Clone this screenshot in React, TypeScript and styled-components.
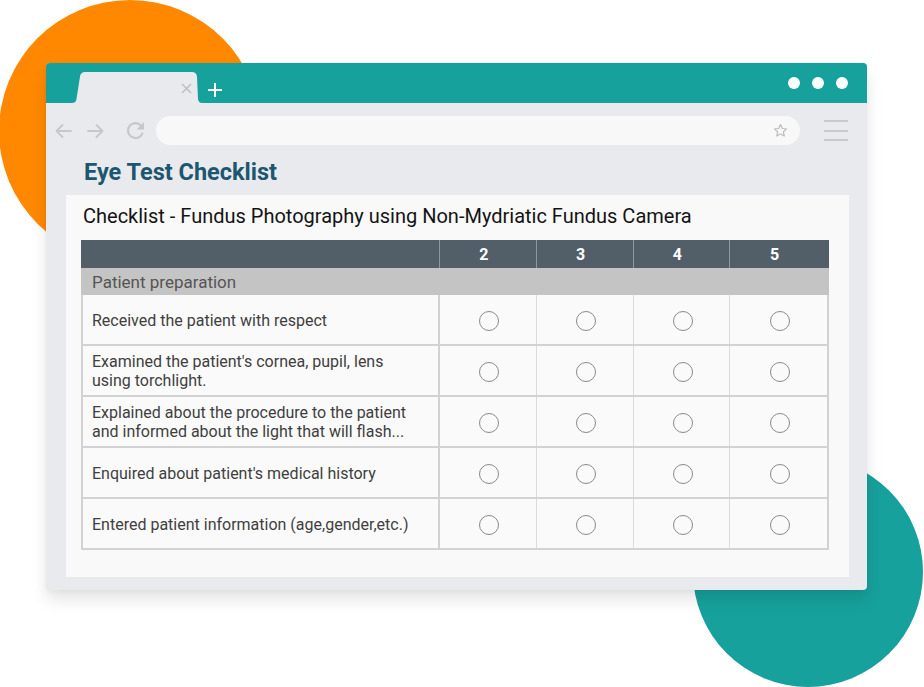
import React from 'react';
import styled, { createGlobalStyle } from 'styled-components';

const Global = createGlobalStyle`
  html, body { margin: 0; padding: 0; background: #ffffff; }
  body { font-family: Roboto, "Liberation Sans", Arial, sans-serif; }
  * { box-sizing: border-box; }
`;

const Stage = styled.div`
  position: relative;
  width: 924px;
  height: 687px;
  overflow: hidden;
  background: #ffffff;
  padding: 63px 0 0 46px;
`;

const Blob = styled.div<{ $color: string; $size: number; $x: number; $y: number }>`
  position: absolute;
  left: ${(p) => p.$x}px;
  top: ${(p) => p.$y}px;
  width: ${(p) => p.$size}px;
  height: ${(p) => p.$size}px;
  border-radius: 50%;
  background: ${(p) => p.$color};
`;

const Window = styled.div`
  position: relative;
  width: 821px;
  height: 527px;
  border-radius: 4px;
  overflow: hidden;
  background: #e9eaee;
  display: flex;
  flex-direction: column;
  box-shadow: 0 10px 16px rgba(0, 0, 0, 0.1), 0 2px 4px rgba(0, 0, 0, 0.04);
`;

const TitleBar = styled.div`
  height: 40px;
  flex: none;
  background: #17a19c;
  display: flex;
  align-items: flex-end;
  padding: 0 19px 0 26px;
`;

const Tab = styled.div`
  position: relative;
  width: 130px;
  height: 31px;
  display: flex;
  align-items: center;
  justify-content: flex-end;
  padding: 2px 10px 0 0;
  &::before {
    content: '';
    position: absolute;
    inset: 0;
    background: #e9eaee;
    clip-path: path('M0 31 C3 31 4 29.5 4.5 27 L8 4.5 C8.5 1.5 10 0 13 0 L120 0 C123 0 124.5 1.5 125 4.5 L126 27 C126.5 29.5 127.5 31 130 31 Z');
  }
  svg { position: relative; }
`;

const NewTab = styled.div`
  margin: 0 0 6px 6px;
  display: flex;
`;

const Dots = styled.div`
  margin-left: auto;
  align-self: flex-start;
  margin-top: 14px;
  display: flex;
  gap: 12px;
`;

const Dot = styled.span`
  width: 12px;
  height: 12px;
  border-radius: 50%;
  background: #ffffff;
`;

const Toolbar = styled.div`
  display: flex;
  align-items: center;
  padding: 13px 19px 0 9px;
  height: 42px;
  flex: none;
`;

const NavButton = styled.span<{ $gap: number }>`
  display: flex;
  margin-right: ${(p) => p.$gap}px;
`;

const UrlBar = styled.div`
  flex: 1;
  height: 29px;
  border-radius: 15px;
  background: #f8f8f9;
  display: flex;
  align-items: center;
  justify-content: flex-end;
  padding-right: 12px;
`;

const Hamburger = styled.div`
  margin-left: 24px;
  width: 24px;
  display: flex;
  flex-direction: column;
  gap: 7.5px;
  span {
    height: 2px;
    background: #cacaca;
  }
`;

const PageTitle = styled.h1`
  margin: 13px 0 9px 38px;
  font-size: 23.5px;
  line-height: 28px;
  font-weight: 700;
  color: #1d5670;
  flex: none;
`;

const Panel = styled.div`
  flex: 1;
  margin: 0 18px 13px 20px;
  background: #f9f9f9;
  padding: 10px 20px 0 15px;
`;

const Heading = styled.h2`
  margin: 0 0 12px 2px;
  font-size: 20px;
  line-height: 23px;
  font-weight: 400;
  color: #141414;
`;

const Table = styled.div`
  width: 748px;
  display: flex;
  flex-direction: column;
`;

const Row = styled.div<{ $kind: 'head' | 'section' | 'body' }>`
  display: grid;
  grid-template-columns: 357px repeat(4, 1fr);
  height: ${(p) => (p.$kind === 'head' ? 28 : p.$kind === 'section' ? 27 : 51)}px;
  background: ${(p) => (p.$kind === 'head' ? '#525f68' : p.$kind === 'section' ? '#c4c4c4' : '#fafafa')};
  border-left: 2px solid ${(p) => (p.$kind === 'body' ? '#d2d2d2' : 'transparent')};
  border-right: 2px solid ${(p) => (p.$kind === 'body' ? '#d2d2d2' : 'transparent')};
  border-bottom: ${(p) => (p.$kind === 'body' ? '2px solid #d2d2d2' : 'none')};
`;

const HeadCell = styled.div`
  display: flex;
  align-items: center;
  justify-content: center;
  padding-right: 8px;
  color: #ffffff;
  font-size: 16px;
  font-weight: 700;
  border-right: 1px solid #8e989f;
  &:last-child { border-right: none; }
`;

const SectionCell = styled.div`
  grid-column: 1 / -1;
  display: flex;
  align-items: center;
  padding-left: 9px;
  font-size: 17px;
  color: #555555;
`;

const LabelCell = styled.div`
  display: flex;
  align-items: center;
  padding: 1px 10px 0 9px;
  font-size: 16px;
  line-height: 19px;
  color: #3f3f3f;
  border-right: 2px solid #d2d2d2;
`;

const RadioCell = styled.div`
  display: flex;
  align-items: center;
  justify-content: center;
  padding: 2px 0 0 3px;
  border-right: 1px solid #dcdcdc;
  &:last-child { border-right: none; }
`;

const Radio = styled.span`
  width: 20px;
  height: 20px;
  border-radius: 50%;
  border: 1.6px solid #8a8a8a;
`;

const Arrow = ({ dir }: { dir: 'left' | 'right' }) => (
  <svg width="17" height="14" viewBox="0 0 17 14" fill="none" stroke="#c7c7c7" strokeWidth="1.8" strokeLinecap="round" strokeLinejoin="round">
    {dir === 'left' ? <path d="M16 7H1.5 M7.5 1L1.5 7l6 6" /> : <path d="M1 7h14.5 M9.5 1l6 6-6 6" />}
  </svg>
);

const Reload = () => (
  <svg width="17" height="17" viewBox="4 4 16 16" fill="#c7c7c7">
    <path d="M17.65 6.35C16.2 4.9 14.21 4 12 4c-4.42 0-7.99 3.58-7.99 8s3.57 8 7.99 8c3.73 0 6.84-2.55 7.73-6h-2.08c-.82 2.33-3.04 4-5.65 4-3.31 0-6-2.69-6-6s2.69-6 6-6c1.66 0 3.14.69 4.22 1.78L13 11h7V4l-2.35 2.35z" />
  </svg>
);

const StarIcon = () => (
  <svg width="15" height="15" viewBox="0 0 24 24" fill="none" stroke="#b9b9b9" strokeWidth="1.8" strokeLinejoin="round">
    <path d="M12 2.5l2.9 6.3 6.9.7-5.2 4.6 1.5 6.8L12 17.4l-6.1 3.5 1.5-6.8-5.2-4.6 6.9-.7z" />
  </svg>
);

const CloseIcon = () => (
  <svg width="11" height="11" viewBox="0 0 11 11" stroke="#bcbcbc" strokeWidth="1.4">
    <path d="M1 1l9 9M10 1l-9 9" />
  </svg>
);

const PlusIcon = () => (
  <svg width="14" height="14" viewBox="0 0 14 14" stroke="#ffffff" strokeWidth="2">
    <path d="M7 0v14M0 7h14" />
  </svg>
);

const items: string[][] = [
  ['Received the patient with respect'],
  ["Examined the patient's cornea, pupil, lens", 'using torchlight.'],
  ['Explained about the procedure to the patient', 'and informed about the light that will flash...'],
  ["Enquired about patient's medical history"],
  ['Entered patient information (age,gender,etc.)'],
];

export default function App() {
  return (
    <>
      <Global />
      <Stage>
        <Blob $color="#ff8800" $size={262} $x={-1} $y={0} />
        <Blob $color="#17a19c" $size={230} $x={693} $y={457} />
        <Window>
          <TitleBar>
            <Tab>
              <CloseIcon />
            </Tab>
            <NewTab>
              <PlusIcon />
            </NewTab>
            <Dots>
              <Dot />
              <Dot />
              <Dot />
            </Dots>
          </TitleBar>
          <Toolbar>
            <NavButton $gap={15}>
              <Arrow dir="left" />
            </NavButton>
            <NavButton $gap={23}>
              <Arrow dir="right" />
            </NavButton>
            <NavButton $gap={12}>
              <Reload />
            </NavButton>
            <UrlBar>
              <StarIcon />
            </UrlBar>
            <Hamburger>
              <span />
              <span />
              <span />
            </Hamburger>
          </Toolbar>
          <PageTitle>Eye Test Checklist</PageTitle>
          <Panel>
            <Heading>Checklist - Fundus Photography using Non-Mydriatic Fundus Camera</Heading>
            <Table>
              <Row $kind="head">
                <HeadCell />
                <HeadCell>2</HeadCell>
                <HeadCell>3</HeadCell>
                <HeadCell>4</HeadCell>
                <HeadCell>5</HeadCell>
              </Row>
              <Row $kind="section">
                <SectionCell>Patient preparation</SectionCell>
              </Row>
              {items.map((lines, i) => (
                <Row $kind="body" key={i}>
                  <LabelCell>
                    <div>
                      {lines.map((l, j) => (
                        <div key={j}>{l}</div>
                      ))}
                    </div>
                  </LabelCell>
                  {[0, 1, 2, 3].map((k) => (
                    <RadioCell key={k}>
                      <Radio />
                    </RadioCell>
                  ))}
                </Row>
              ))}
            </Table>
          </Panel>
        </Window>
      </Stage>
    </>
  );
}
